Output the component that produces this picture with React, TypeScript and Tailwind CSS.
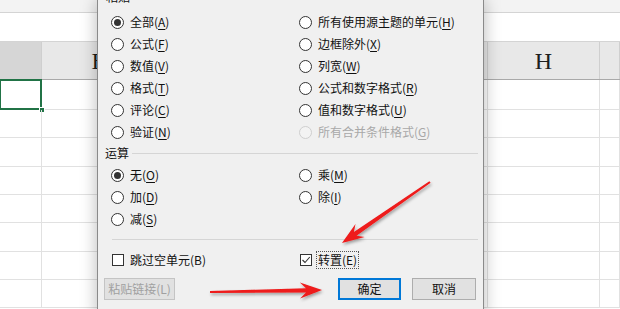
import type { ReactNode } from 'react';

const font = { fontFamily: '"Noto Sans CJK SC", "Noto Sans", sans-serif' };

// widths of spreadsheet columns, left to right (labels only where they show)
const cols = [
  { name: 'A', label: '', w: 'w-[42px]' },
  { name: 'B', label: 'B', w: 'w-[116px]' },
  { name: 'C', label: '', w: 'w-[66px]' },
  { name: 'D', label: '', w: 'w-[66px]' },
  { name: 'E', label: '', w: 'w-[66px]' },
  { name: 'F', label: '', w: 'w-[66px]' },
  { name: 'G', label: '', w: 'w-[66px]' },
  { name: 'H', label: 'H', w: 'w-[112px]' },
  { name: 'I', label: '', w: 'w-[20px]' },
];

const rowHeights = ['h-[30px]', 'h-[28px]', 'h-[29px]', 'h-[28px]', 'h-[28px]', 'h-[29px]', 'h-[28px]', 'h-[28px]'];

function KeyLabel({ text, underline = true }: { text: string; underline?: boolean }) {
  const m = text.match(/^(.*\()(.)(\))$/);
  if (!m || !underline) return <span>{text}</span>;
  return (
    <span>
      {m[1]}
      <span className="underline underline-offset-[2px]">{m[2]}</span>
      {m[3]}
    </span>
  );
}

function Radio({ label, checked, disabled }: { label: string; checked?: boolean; disabled?: boolean }) {
  return (
    <div className="flex items-center gap-[6px] h-[22px]">
      <span
        className={`w-[13px] h-[13px] rounded-full border flex items-center justify-center shrink-0 ${
          disabled ? 'border-[#cfcfcf] bg-[#f3f3f3]' : 'border-[#333] bg-white'
        }`}
      >
        {checked && <span className="w-[7px] h-[7px] rounded-full bg-[#333]" />}
      </span>
      <span className={`text-[12px] leading-[16px] ${disabled ? 'text-[#a8a8a8]' : 'text-[#111]'}`}>
        <KeyLabel text={label} />
      </span>
    </div>
  );
}

function Check({ label, checked, focused }: { label: string; checked?: boolean; focused?: boolean }) {
  return (
    <div className="flex items-center h-[20px]">
      <span className="w-[12px] h-[12px] border border-[#333] bg-white shrink-0 flex items-center justify-center">
        {checked && (
          <svg width="10" height="10" viewBox="0 0 10 10">
            <path d="M1.5 5 L4 7.5 L8.8 2" fill="none" stroke="#333" strokeWidth="1.1" />
          </svg>
        )}
      </span>
      <span
        className={`text-[12px] leading-none text-[#111] ${
          focused ? 'ml-[4px] px-[1px] py-[2px] border border-dotted border-[#555]' : 'ml-[6px]'
        }`}
      >
        {label}
      </span>
    </div>
  );
}

function Button({ children, kind, w }: { children: ReactNode; kind: 'default' | 'primary' | 'disabled'; w: string }) {
  const look =
    kind === 'primary'
      ? 'border-2 border-[#0078d7] text-[#111]'
      : kind === 'disabled'
      ? 'border border-[#c4c4c4] bg-[#dedede] text-[#a0a0a0]'
      : 'border border-[#adadad] text-[#111]';
  return (
    <div className={`${w} h-[22px] flex items-center justify-center text-[12px] bg-[#e1e1e1] ${look}`}>{children}</div>
  );
}

function Sheet() {
  return (
    <div>
      <div className="h-[13px] bg-[#f3f3f3] border-b border-[#d4d4d4]" />
      <div className="h-[29px] bg-white border-b border-[#d4d4d4]" />
      <div className="h-[38px] flex bg-[#e8e8e8] border-b border-[#a9a9a9]">
        {cols.map((c) => (
          <div
            key={c.name}
            className={`${c.w} shrink-0 border-r border-[#cfcfcf] flex items-center justify-center text-[24px] text-[#1e1e1e] ${
              c.name === 'A' ? 'bg-[#d6d6d6]' : ''
            }`}
            style={{ fontFamily: '"Liberation Serif", serif' }}
          >
            {c.label}
          </div>
        ))}
      </div>
      {rowHeights.map((h, r) => (
        <div key={r} className={`${h} flex border-b border-[#e1e1e1]`}>
          {cols.map((c) => (
            <div key={c.name} className={`${c.w} shrink-0 border-r border-[#e1e1e1] relative`}>
              {r === 0 && c.name === 'A' && (
                <>
                  <div className="absolute -top-px -left-px right-[-1px] bottom-[-1px] border-2 border-[#217346]" />
                  <div className="absolute right-[-4px] bottom-[-4px] w-[6px] h-[6px] bg-[#217346] border border-white" />
                </>
              )}
            </div>
          ))}
        </div>
      ))}
    </div>
  );
}

function Dialog() {
  return (
    <div className="absolute left-[97px] top-0 w-[387px] h-[320px] bg-[#f0f0f0] border-x border-[#8a8a8a] shadow-[0_0_16px_rgba(0,0,0,0.28)]">
      <div className="h-[16px] mt-[-11px] pl-[8px] text-[12px] leading-[16px] text-[#111]">粘贴</div>

      <div className="mt-[6px] pl-[13px] grid grid-cols-[188px_1fr]">
        <Radio label="全部(A)" checked />
        <Radio label="所有使用源主题的单元(H)" />
        <Radio label="公式(F)" />
        <Radio label="边框除外(X)" />
        <Radio label="数值(V)" />
        <Radio label="列宽(W)" />
        <Radio label="格式(T)" />
        <Radio label="公式和数字格式(R)" />
        <Radio label="评论(C)" />
        <Radio label="值和数字格式(U)" />
        <Radio label="验证(N)" />
        <Radio label="所有合并条件格式(G)" disabled />
      </div>

      <div className="h-[20px] flex items-center pl-[7px] pr-[5px]">
        <span className="text-[12px] leading-[16px] text-[#111]">运算</span>
        <div className="flex-1 ml-[3px] border-t border-[#d5d5d5]" />
      </div>

      <div className="mt-[1px] pl-[13px] grid grid-cols-[188px_1fr]">
        <Radio label="无(O)" checked />
        <Radio label="乘(M)" />
        <Radio label="加(D)" />
        <Radio label="除(I)" />
        <Radio label="减(S)" />
      </div>

      <div className="mt-[9px] ml-[14px] mr-[5px] border-t border-[#d5d5d5]" />

      <div className="mt-[10px] pl-[14px] grid grid-cols-[188px_1fr]">
        <Check label="跳过空单元(B)" />
        <Check label="转置(E)" checked focused />
      </div>

      <div className="mt-[8px] pl-[6px] flex">
        <Button kind="disabled" w="w-[71px]">粘贴链接(L)</Button>
        <div className="ml-[163px] flex gap-[11px]">
          <Button kind="primary" w="w-[63px]">确定</Button>
          <Button kind="default" w="w-[64px]">取消</Button>
        </div>
      </div>
    </div>
  );
}

function Arrows() {
  return (
    <svg className="absolute inset-0 pointer-events-none" width="620" height="309" viewBox="0 0 620 309">
      <defs>
        <filter id="arrowShadow" x="-20%" y="-20%" width="140%" height="140%">
          <feDropShadow dx="1" dy="2" stdDeviation="1.6" floodColor="#000" floodOpacity="0.35" />
        </filter>
      </defs>
      <g fill="#ee1a1a" filter="url(#arrowShadow)">
        <polygon points="430.6,182.8 356.5,235.8 364.6,237.1 342,243 355.5,223.9 353.9,232 429.4,181.2" />
        <polygon points="210,293 306,292.6 300.1,298.4 322,290 299.9,282.4 306,288.2 210,291" />
      </g>
    </svg>
  );
}

export default function App() {
  return (
    <div className="relative w-[620px] h-[309px] overflow-hidden bg-white" style={font}>
      <Sheet />
      <Dialog />
      <Arrows />
    </div>
  );
}
